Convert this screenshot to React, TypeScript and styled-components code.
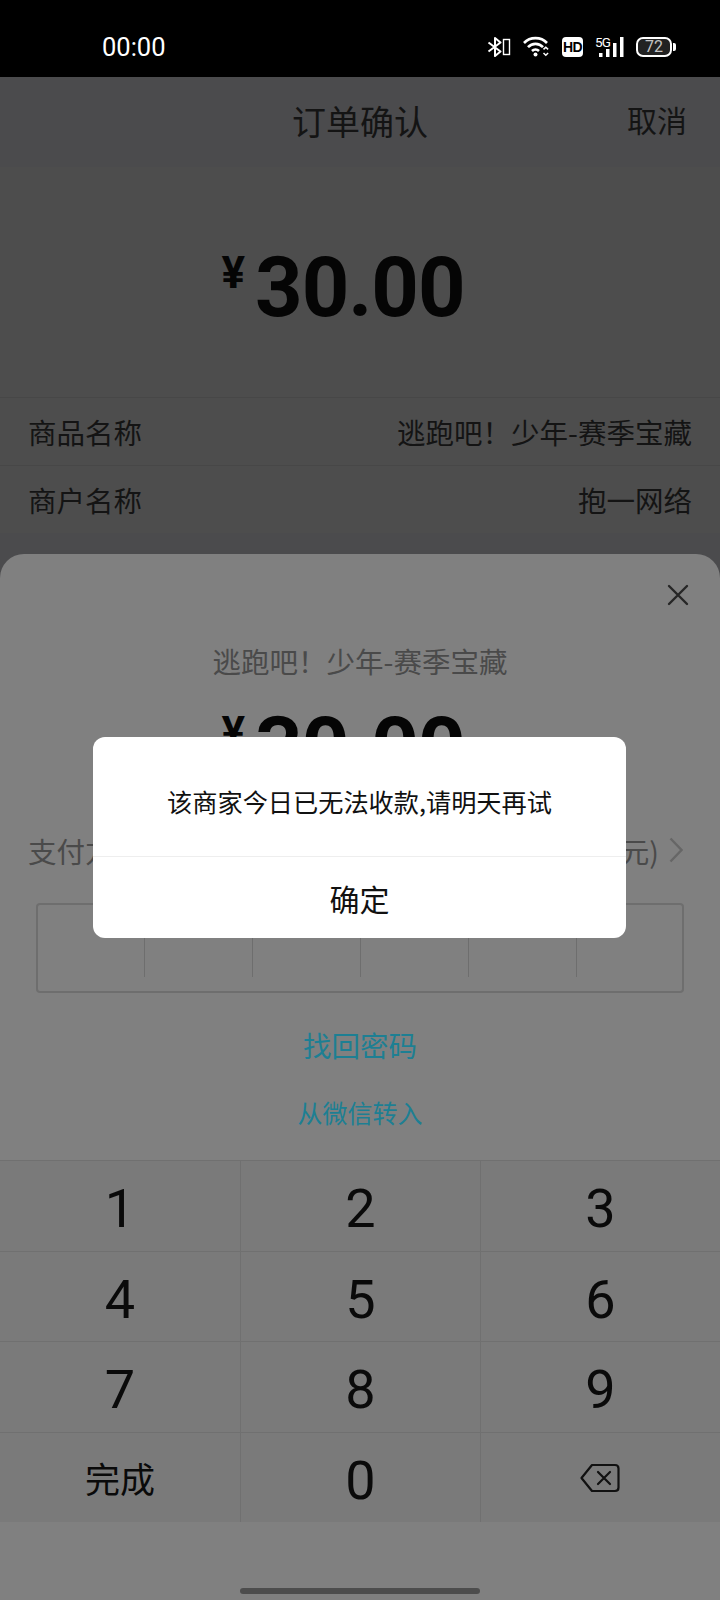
import styled, { createGlobalStyle } from "styled-components";

const cjk = `"Noto Sans CJK SC", "Noto Sans", sans-serif`;
const digits = `Roboto, "Noto Sans CJK SC", sans-serif`;

const keys = ["1", "2", "3", "4", "5", "6", "7", "8", "9", "完成", "0", "del"];

const Bluetooth = () => (
  <svg width="24" height="20" viewBox="0 0 24 20" fill="none" stroke="#fff">
    <path d="M1.5 5.5 L13.5 14.5 L8 19 V1 L13.5 5.5 L1.5 14.5" strokeWidth="2" strokeLinejoin="round" />
    <rect x="16.5" y="2.5" width="6" height="15" strokeWidth="1.4" />
  </svg>
);

const Wifi = () => (
  <svg width="27" height="21" viewBox="0 0 27 21" fill="none" stroke="#fff" strokeWidth="2.6">
    <path d="M1 7 C7 0.5 18 0.5 24 7" />
    <path d="M5 11.2 C9 6.7 16 6.7 20 11.2" />
    <path d="M9 15 C11 13 14 13 16 15" />
    <circle cx="12.5" cy="18.6" r="2" fill="#fff" stroke="none" />
    <path d="M20.5 13.4 L22.8 11.2 L25.1 13.4 M20.5 17 L22.8 19.2 L25.1 17" strokeWidth="1.5" />
  </svg>
);

const Signal = () => (
  <svg width="25" height="20" viewBox="0 0 25 20" fill="#fff">
    <rect x="0" y="16" width="3.5" height="4" />
    <rect x="7" y="12" width="3.5" height="8" />
    <rect x="14" y="6" width="3.5" height="14" />
    <rect x="21" y="0" width="3.5" height="20" />
  </svg>
);

const CloseIcon = () => (
  <svg width="22" height="22" viewBox="0 0 22 22" stroke="#262626" strokeWidth="2.4" strokeLinecap="round">
    <path d="M2 2 L20 20 M20 2 L2 20" />
  </svg>
);

const Chevron = () => (
  <svg width="14" height="26" viewBox="0 0 14 26" fill="none" stroke="#666" strokeWidth="2.4">
    <path d="M1.5 1.5 L12.5 13 L1.5 24.5" />
  </svg>
);

const BackspaceIcon = () => (
  <svg width="40" height="30" viewBox="0 0 40 30" fill="none" stroke="#111" strokeWidth="2.2" strokeLinejoin="round">
    <path d="M12 2 H35 Q38.5 2 38.5 5.5 V24.5 Q38.5 28 35 28 H12 L1.5 15 Z" />
    <path d="M18 9 L30 21 M30 9 L18 21" strokeLinecap="round" />
  </svg>
);

export default function App() {
  return (
    <>
      <GlobalStyle />
      <Screen>
        <StatusBar>
          <Time>00:00</Time>
          <StatusIcons>
            <Bluetooth />
            <Wifi />
            <HdBadge>HD</HdBadge>
            <NetworkGroup>
              <FiveG>5G</FiveG>
              <Signal />
            </NetworkGroup>
            <Battery>
              72
              <BatteryNub />
            </Battery>
          </StatusIcons>
        </StatusBar>

        <Header>
          <HeaderTitle>订单确认</HeaderTitle>
          <HeaderCancel>取消</HeaderCancel>
        </Header>
        <OrderBody>
          <OrderAmount>
            <Amount>
              <Yen>¥</Yen>30.00
            </Amount>
          </OrderAmount>
          <OrderRow>
            <span>商品名称</span>
            <span>逃跑吧！少年-赛季宝藏</span>
          </OrderRow>
          <OrderRow>
            <span>商户名称</span>
            <span>抱一网络</span>
          </OrderRow>
        </OrderBody>

        <Sheet>
          <CloseRow>
            <CloseIcon />
          </CloseRow>
          <SheetTitle>逃跑吧！少年-赛季宝藏</SheetTitle>
          <SheetAmount>
            <Amount>
              <Yen>¥</Yen>30.00
            </Amount>
          </SheetAmount>
          <PayRow>
            <span>支付方式</span>
            <PayValue>
              零钱(剩余0.00元)
              <Chevron />
            </PayValue>
          </PayRow>
          <PasswordBox>
            {[0, 1, 2, 3, 4, 5].map((i) => (
              <PasswordCell key={i} />
            ))}
          </PasswordBox>
          <ForgotLink>找回密码</ForgotLink>
          <TransferLink>从微信转入</TransferLink>
          <Keypad>
            {keys.map((key) => (
              <Key key={key} $text={key === "完成"} $icon={key === "del"}>
                {key === "del" ? <BackspaceIcon /> : key}
              </Key>
            ))}
          </Keypad>
          <HomeBar />
        </Sheet>

        <Dialog>
          <DialogMessage>该商家今日已无法收款,请明天再试</DialogMessage>
          <DialogButton>确定</DialogButton>
        </Dialog>
      </Screen>
    </>
  );
}

const GlobalStyle = createGlobalStyle`
  html, body {
    margin: 0;
    padding: 0;
    background: #000;
  }
`;

const Screen = styled.div`
  position: relative;
  width: 720px;
  height: 1600px;
  overflow: hidden;
  background: #4b4b4d;
  font-family: ${cjk};
  color: #111;
`;

const StatusBar = styled.div`
  height: 77px;
  background: #000;
  display: flex;
  align-items: center;
  justify-content: space-between;
  padding: 16px 48px 0 102px;
  box-sizing: border-box;
  color: #fff;
`;

const Time = styled.span`
  font-family: ${digits};
  font-size: 25.5px;
`;

const StatusIcons = styled.div`
  display: flex;
  align-items: center;
  gap: 12px;
`;

const HdBadge = styled.span`
  width: 21px;
  height: 20px;
  border-radius: 4px;
  background: #fff;
  color: #000;
  display: flex;
  align-items: center;
  justify-content: center;
  font-family: "Liberation Sans", sans-serif;
  font-weight: 700;
  font-size: 14px;
  letter-spacing: -0.5px;
`;

const NetworkGroup = styled.div`
  position: relative;
  width: 29px;
  height: 20px;
  display: flex;
  justify-content: flex-end;
`;

const FiveG = styled.span`
  position: absolute;
  left: 0;
  top: -2px;
  font-family: ${digits};
  font-size: 13.5px;
  line-height: 14px;
  letter-spacing: -0.8px;
`;

const Battery = styled.div`
  position: relative;
  width: 36px;
  height: 20px;
  border: 2px solid #fff;
  border-radius: 7px;
  box-sizing: border-box;
  display: flex;
  align-items: center;
  justify-content: center;
  font-family: ${digits};
  font-size: 16px;
  color: #c4c4c4;
  background: #222;
`;

const BatteryNub = styled.span`
  position: absolute;
  right: -6px;
  top: 4px;
  width: 3px;
  height: 8px;
  border-radius: 0 2px 2px 0;
  background: #fff;
`;

const Header = styled.div`
  position: relative;
  height: 90px;
  padding-bottom: 4px;
  box-sizing: border-box;
  display: flex;
  align-items: center;
  justify-content: center;
  background: #4b4b4d;
`;

const HeaderTitle = styled.span`
  font-size: 34px;
  color: #141414;
`;

const HeaderCancel = styled.span`
  position: absolute;
  right: 33px;
  top: 20px;
  font-size: 30px;
  line-height: 44px;
  color: #141414;
`;

const OrderBody = styled.div`
  background: #4d4d4d;
  height: 366px;
`;

const OrderAmount = styled.div`
  height: 230px;
  padding-top: 71px;
  box-sizing: border-box;
  display: flex;
  justify-content: center;
`;

const Amount = styled.div`
  display: flex;
  align-items: flex-start;
  height: 100px;
  padding-right: 34px;
  font-family: ${digits};
  font-weight: 700;
  font-size: 83px;
  line-height: 100px;
  letter-spacing: -1px;
  color: #050505;
`;

const Yen = styled.span`
  font-size: 44px;
  line-height: 52px;
  padding-top: 9px;
  margin: 0 10px 0 0;
  letter-spacing: 0;
`;

const OrderRow = styled.div`
  height: 68px;
  padding: 0 28px;
  display: flex;
  align-items: center;
  justify-content: space-between;
  font-size: 28.5px;
  color: #141414;
  border-top: 1px solid #474747;
  box-sizing: border-box;
`;

const Sheet = styled.div`
  position: absolute;
  left: 0;
  right: 0;
  top: 554px;
  bottom: 0;
  background: #808080;
  border-radius: 24px 24px 0 0;
  display: flex;
  flex-direction: column;
`;

const CloseRow = styled.div`
  height: 82px;
  padding: 30px 31px 0 0;
  box-sizing: border-box;
  display: flex;
  justify-content: flex-end;
`;

const SheetTitle = styled.div`
  height: 50px;
  line-height: 50px;
  text-align: center;
  font-size: 28.5px;
  color: #4a4a4a;
`;

const SheetAmount = styled.div`
  margin-top: 12px;
  display: flex;
  justify-content: center;
`;

const PayRow = styled.div`
  margin-top: 26px;
  height: 52px;
  padding: 0 37px 0 28px;
  display: flex;
  align-items: center;
  justify-content: space-between;
  font-size: 28.5px;
  color: #4a4a4a;
`;

const PayValue = styled.span`
  display: flex;
  align-items: center;
  gap: 10px;
`;

const PasswordBox = styled.div`
  margin: 27px 36px 0;
  height: 90px;
  box-shadow: inset 0 0 0 2px #6e6e6e;
  border-radius: 4px;
  display: grid;
  grid-template-columns: repeat(6, 1fr);
  align-items: center;
`;

const PasswordCell = styled.div`
  height: 58px;
  border-left: 1px solid #6e6e6e;
  &:first-child {
    border-left: 0;
  }
`;

const ForgotLink = styled.div`
  margin-top: 26px;
  height: 52px;
  line-height: 52px;
  text-align: center;
  font-size: 28.5px;
  color: #1d7f93;
`;

const TransferLink = styled.div`
  margin-top: 15px;
  height: 52px;
  line-height: 52px;
  text-align: center;
  font-size: 25px;
  color: #1d7f93;
`;

const Keypad = styled.div`
  margin-top: 22px;
  display: grid;
  grid-template-columns: repeat(3, 1fr);
  grid-auto-rows: 90.5px;
  background: #7a7a7a;
`;

const Key = styled.div<{ $text?: boolean; $icon?: boolean }>`
  display: flex;
  align-items: center;
  justify-content: center;
  box-sizing: border-box;
  border-top: 1px solid #707070;
  padding-top: ${(p) => (p.$text ? "0" : p.$icon ? "2px" : "6px")};
  padding-right: ${(p) => (p.$icon ? "2px" : "0")};
  font-family: ${digits};
  font-size: ${(p) => (p.$text ? "35px" : "54px")};
  color: #0a0a0a;
  &:not(:nth-child(3n + 1)) {
    border-left: 1px solid #707070;
  }
`;

const HomeBar = styled.div`
  margin: 66px auto 0;
  width: 240px;
  height: 6px;
  border-radius: 3px;
  background: #4d4d4d;
`;

const Dialog = styled.div`
  position: absolute;
  left: 93px;
  top: 737px;
  width: 533px;
  height: 201px;
  background: #fff;
  border-radius: 12px;
  display: flex;
  flex-direction: column;
`;

const DialogMessage = styled.div`
  height: 120px;
  padding-top: 9px;
  box-sizing: border-box;
  display: flex;
  align-items: center;
  justify-content: center;
  font-size: 25.2px;
  color: #111;
  border-bottom: 1px solid #eee;
`;

const DialogButton = styled.div`
  flex: 1;
  display: flex;
  align-items: center;
  justify-content: center;
  font-size: 30px;
  color: #111;
`;
